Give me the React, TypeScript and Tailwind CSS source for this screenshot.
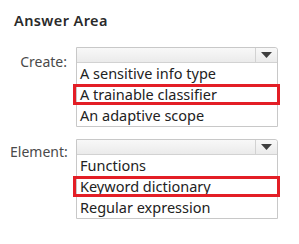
import React from "react";

type DropdownProps = {
  items: string[];
  highlight: number;
};

const Dropdown = ({ items, highlight }: DropdownProps) => (
  <div className="w-[202px] border border-[#c8c8c8] rounded-tr-[3px] bg-white">
    <div className="h-[15px] flex bg-gradient-to-b from-[#f8f8f8] to-[#ebebeb] border-b border-[#d2d2d2] rounded-tr-[3px]">
      <div className="flex-1" />
      <div className="w-[22px] border-l border-[#d2d2d2] flex items-center justify-center">
        <svg width="11" height="6" viewBox="0 0 11 6">
          <path d="M0 0h11L5.5 6z" fill="#3f3f3f" />
        </svg>
      </div>
    </div>
    {items.map((item, i) => (
      <div key={item} className="relative h-[21px] px-[3px] leading-[21px] text-[14.5px] text-[#222]">
        {item}
        {i === highlight && (
          <span className="absolute -left-[4px] -right-[3px] top-0 bottom-0 border-[3px] border-[#e31e26]" />
        )}
      </div>
    ))}
  </div>
);

export default function App() {
  return (
    <div
      className="w-[299px] h-[244px] bg-white pl-[14px] pt-[11px]"
      style={{ fontFamily: '"Noto Sans", "Open Sans", sans-serif' }}
    >
      <div className="text-[14.5px] font-semibold tracking-[0.4px] text-[#2a2a2a] leading-[19px]">Answer Area</div>
      <div className="mt-[17px] flex flex-col gap-[12px]">
        <div className="flex">
          <div className="w-[57px] -ml-[4px] text-right pt-[6px] text-[14px] leading-[18px] text-[#4a4a4a]">
            Create:
          </div>
          <div className="ml-[9px]">
            <Dropdown
              items={["A sensitive info type", "A trainable classifier", "An adaptive scope"]}
              highlight={1}
            />
          </div>
        </div>
        <div className="flex">
          <div className="w-[57px] -ml-[4px] text-right pt-[4px] text-[14px] leading-[18px] text-[#4a4a4a]">
            Element:
          </div>
          <div className="ml-[9px]">
            <Dropdown items={["Functions", "Keyword dictionary", "Regular expression"]} highlight={1} />
          </div>
        </div>
      </div>
    </div>
  );
}
